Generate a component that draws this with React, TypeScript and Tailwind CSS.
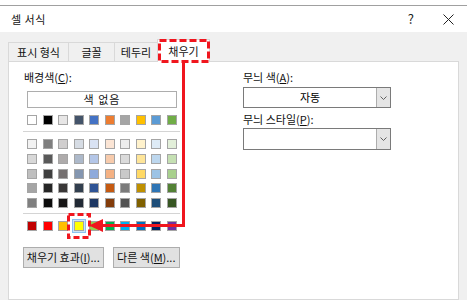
const theme = ['#ffffff', '#000000', '#e7e6e6', '#44546a', '#4472c4', '#ed7d31', '#a5a5a5', '#ffc000', '#5b9bd5', '#70ad47'];

const tints = [
  ['#f2f2f2', '#7f7f7f', '#d0cece', '#d6dce4', '#d9e2f3', '#fbe5d5', '#ededed', '#fff2cc', '#deebf6', '#e2efd9'],
  ['#d8d8d8', '#595959', '#aeabab', '#adb9ca', '#b4c6e7', '#f7cbac', '#dbdbdb', '#fee599', '#bdd7ee', '#c5e0b3'],
  ['#bfbfbf', '#3f3f3f', '#757070', '#8496b0', '#8eaadb', '#f4b183', '#c9c9c9', '#ffd965', '#9cc3e5', '#a8d08d'],
  ['#a5a5a5', '#262626', '#3a3838', '#323f4f', '#2f5496', '#c55a11', '#7b7b7b', '#bf9000', '#2e75b5', '#538135'],
  ['#7f7f7f', '#0c0c0c', '#171616', '#222a35', '#1e3864', '#833c0b', '#525252', '#7f6000', '#1e4e79', '#375623'],
];

const standard = ['#c00000', '#ff0000', '#ffc000', '#ffff00', '#92d050', '#00b050', '#00b0f0', '#0070c0', '#002060', '#7030a0'];

const Swatch = ({ color, selected }: { color: string; selected?: boolean }) => (
  <div
    className={
      selected
        ? 'w-[10px] h-[10px] border border-[#a5a5a5] shadow-[0_0_0_1px_#cce4f7,0_0_0_2px_#8cc2f0]'
        : 'w-[10px] h-[10px] border border-[#a5a5a5]'
    }
    style={{ backgroundColor: color }}
  />
);

const SwatchRow = ({ colors, selectedIndex }: { colors: string[]; selectedIndex?: number }) => (
  <div className="ml-[4px] w-[150px] flex justify-between">
    {colors.map((c, i) => (
      <Swatch key={i} color={c} selected={i === selectedIndex} />
    ))}
  </div>
);

const Dropdown = ({ value, className }: { value?: string; className: string }) => (
  <div className={`w-[148px] border border-[#7a7a7a] bg-white flex ${className}`}>
    <div className="flex-1 flex items-center justify-center text-[11px] text-black">{value}</div>
    <div className="w-[14px] border-l border-[#adadad] bg-[#e5e5e5] flex items-center justify-center">
      <svg width="7" height="4" viewBox="0 0 7 4">
        <path d="M0.5 0.5 L3.5 3.5 L6.5 0.5" fill="none" stroke="#606060" strokeWidth="1" />
      </svg>
    </div>
  </div>
);

export default function App() {
  return (
    <div className="relative w-[473px] h-[300px] bg-white overflow-hidden font-['Noto_Sans_CJK_KR','Noto_Sans',sans-serif] text-[#111]">
      <div className="mt-[5px] w-[467px] h-[295px] border-t border-[#a0a0a0] bg-[#f0f0f0] flex flex-col">
        {/* title bar */}
        <div className="h-[26px] bg-white flex items-center pl-[11px] text-[11px]">
          <span className="tracking-[0.5px]">셀 서식</span>
          <span className="ml-auto text-[13px] text-[#222]">?</span>
          <svg className="ml-[29px] mr-[13px]" width="11" height="11" viewBox="0 0 11 11">
            <path d="M0.5 0.5 L10.5 10.5 M10.5 0.5 L0.5 10.5" stroke="#222" strokeWidth="1" />
          </svg>
        </div>

        {/* tabs */}
        <div className="h-[29px] px-[8px] flex items-end text-[11px]">
          <div className="w-[61px] h-[19px] border border-b-0 border-[#d9d9d9] flex items-center justify-center">표시 형식</div>
          <div className="w-[47px] h-[19px] -ml-px border border-b-0 border-[#d9d9d9] flex items-center justify-center">글꼴</div>
          <div className="w-[44px] h-[19px] -ml-px border border-b-0 border-[#d9d9d9] flex items-center justify-center">테두리</div>
          <div className="relative z-10 w-[53px] h-[23px] -ml-px -mb-px border border-b-0 border-[#d9d9d9] bg-white flex items-center justify-center">채우기</div>
        </div>

        {/* panel */}
        <div className="flex-1 mx-[8px] border border-[#d9d9d9] bg-white flex text-[11px]">
          <div className="ml-[14px] w-[157px] pt-[7px] flex flex-col">
            <div className="h-[16px] leading-[16px] pl-[1px]">
              배경색(<u>C</u>):
            </div>
            <div className="mt-[6px] ml-[4px] w-[150px] h-[17px] border border-[#adadad] flex items-center justify-center tracking-[1px]">색 없음</div>
            <div className="mt-[7px]">
              <SwatchRow colors={theme} />
            </div>
            <div className="mt-[6px] h-px bg-[#d4d4d4]" />
            <div className="mt-[7px] flex flex-col gap-y-[4.75px]">
              {tints.map((row, i) => (
                <SwatchRow key={i} colors={row} />
              ))}
            </div>
            <div className="mt-[5px] h-px bg-[#d4d4d4]" />
            <div className="mt-[7px]">
              <SwatchRow colors={standard} selectedIndex={3} />
            </div>
            <div className="mt-[16px] flex gap-[9px] whitespace-nowrap">
              <div className="w-[86px] h-[21px] border border-[#adadad] bg-[#e1e1e1] flex items-center justify-center">
                채우기 효과(<u>I</u>)...
              </div>
              <div className="w-[72px] h-[21px] border border-[#adadad] bg-[#e1e1e1] flex items-center justify-center">
                다른 색(<u>M</u>)...
              </div>
            </div>
          </div>

          <div className="ml-[63px] pt-[7px] flex flex-col">
            <div className="h-[16px] leading-[16px]">
              무늬 색(<u>A</u>):
            </div>
            <Dropdown value="자동" className="mt-[2px] h-[21px]" />
            <div className="mt-[3px] h-[16px] leading-[16px]">
              무늬 스타일(<u>P</u>):
            </div>
            <Dropdown className="mt-[1px] h-[22px]" />
          </div>
        </div>
      </div>

      {/* red annotation */}
      <svg className="absolute inset-0 pointer-events-none z-20" width="473" height="300" viewBox="0 0 473 300">
        <rect x="159.5" y="40.5" width="49" height="21" fill="none" stroke="#f0161e" strokeWidth="3" strokeDasharray="7 3" />
        <path d="M183.5 63 L183.5 225.5 L101 225.5" fill="none" stroke="#f0161e" strokeWidth="3" />
        <polygon points="89,225.5 103,219 103,232" fill="#f0161e" />
        <rect x="68.5" y="214.5" width="21" height="23" fill="none" stroke="#f0161e" strokeWidth="3" strokeDasharray="6 3" />
      </svg>
    </div>
  );
}
